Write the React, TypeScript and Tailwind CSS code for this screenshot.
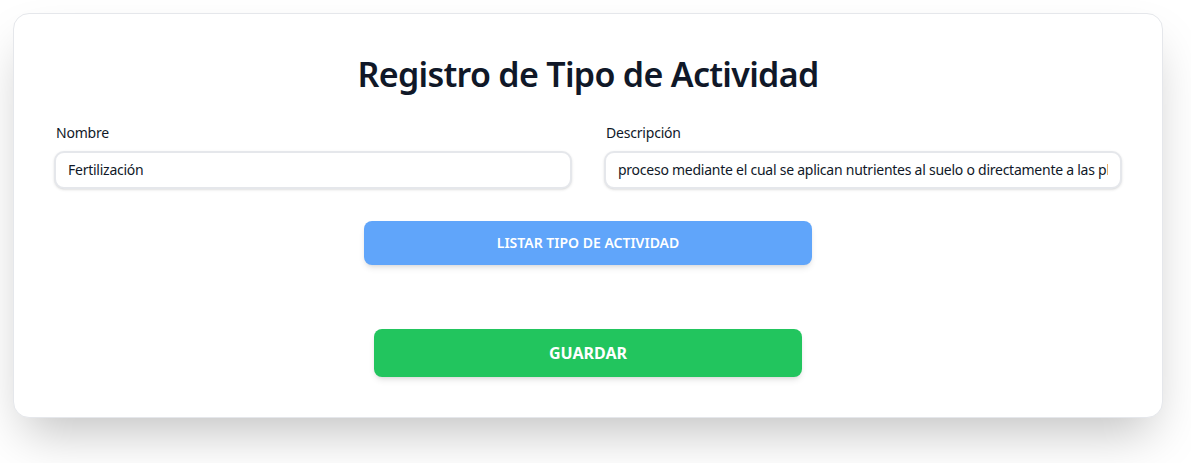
import React from 'react';

const font = { fontFamily: '"Noto Sans", "Open Sans", Arial, sans-serif' };

const Field = ({ label, value }: { label: string; value: string }) => {
  return (
    <div className="flex flex-col">
      <label className="text-sm leading-5 text-gray-900 mb-2 ml-[2px] tracking-[-0.2px]">{label}</label>
      <input
        type="text"
        readOnly
        value={value}
        className="w-full border-2 border-gray-200 rounded-[10px] px-3 py-[7px] text-sm leading-5 text-gray-900 bg-white shadow-sm outline-none tracking-[-0.25px]"
      />
    </div>
  );
};

export default function App() {
  return (
    <div className="min-h-[463px] bg-white pt-[13px] pl-[13px]" style={font}>
      <div className="w-[1150px] bg-white border border-gray-200 rounded-2xl shadow-2xl px-10 pt-10 pb-10 flex flex-col items-center">
        <h1 className="text-[34px] leading-10 font-semibold text-gray-900 tracking-[-0.7px]">
          Registro de Tipo de Actividad
        </h1>
        <div className="w-full grid grid-cols-2 gap-8 mt-[29px]">
          <Field label="Nombre" value="Fertilización" />
          <Field
            label="Descripción"
            value="proceso mediante el cual se aplican nutrientes al suelo o directamente a las plantas para mejorar su crecimiento"
          />
        </div>
        <button
          type="button"
          className="mt-8 w-full max-w-md h-11 bg-[#60a5fa] text-white text-sm font-semibold uppercase rounded-lg shadow-md"
        >
          Listar Tipo de Actividad
        </button>
        <button
          type="button"
          className="mt-16 w-2/5 h-12 bg-[#22c55e] text-white text-base font-bold uppercase rounded-lg shadow-md"
        >
          Guardar
        </button>
      </div>
    </div>
  );
}
